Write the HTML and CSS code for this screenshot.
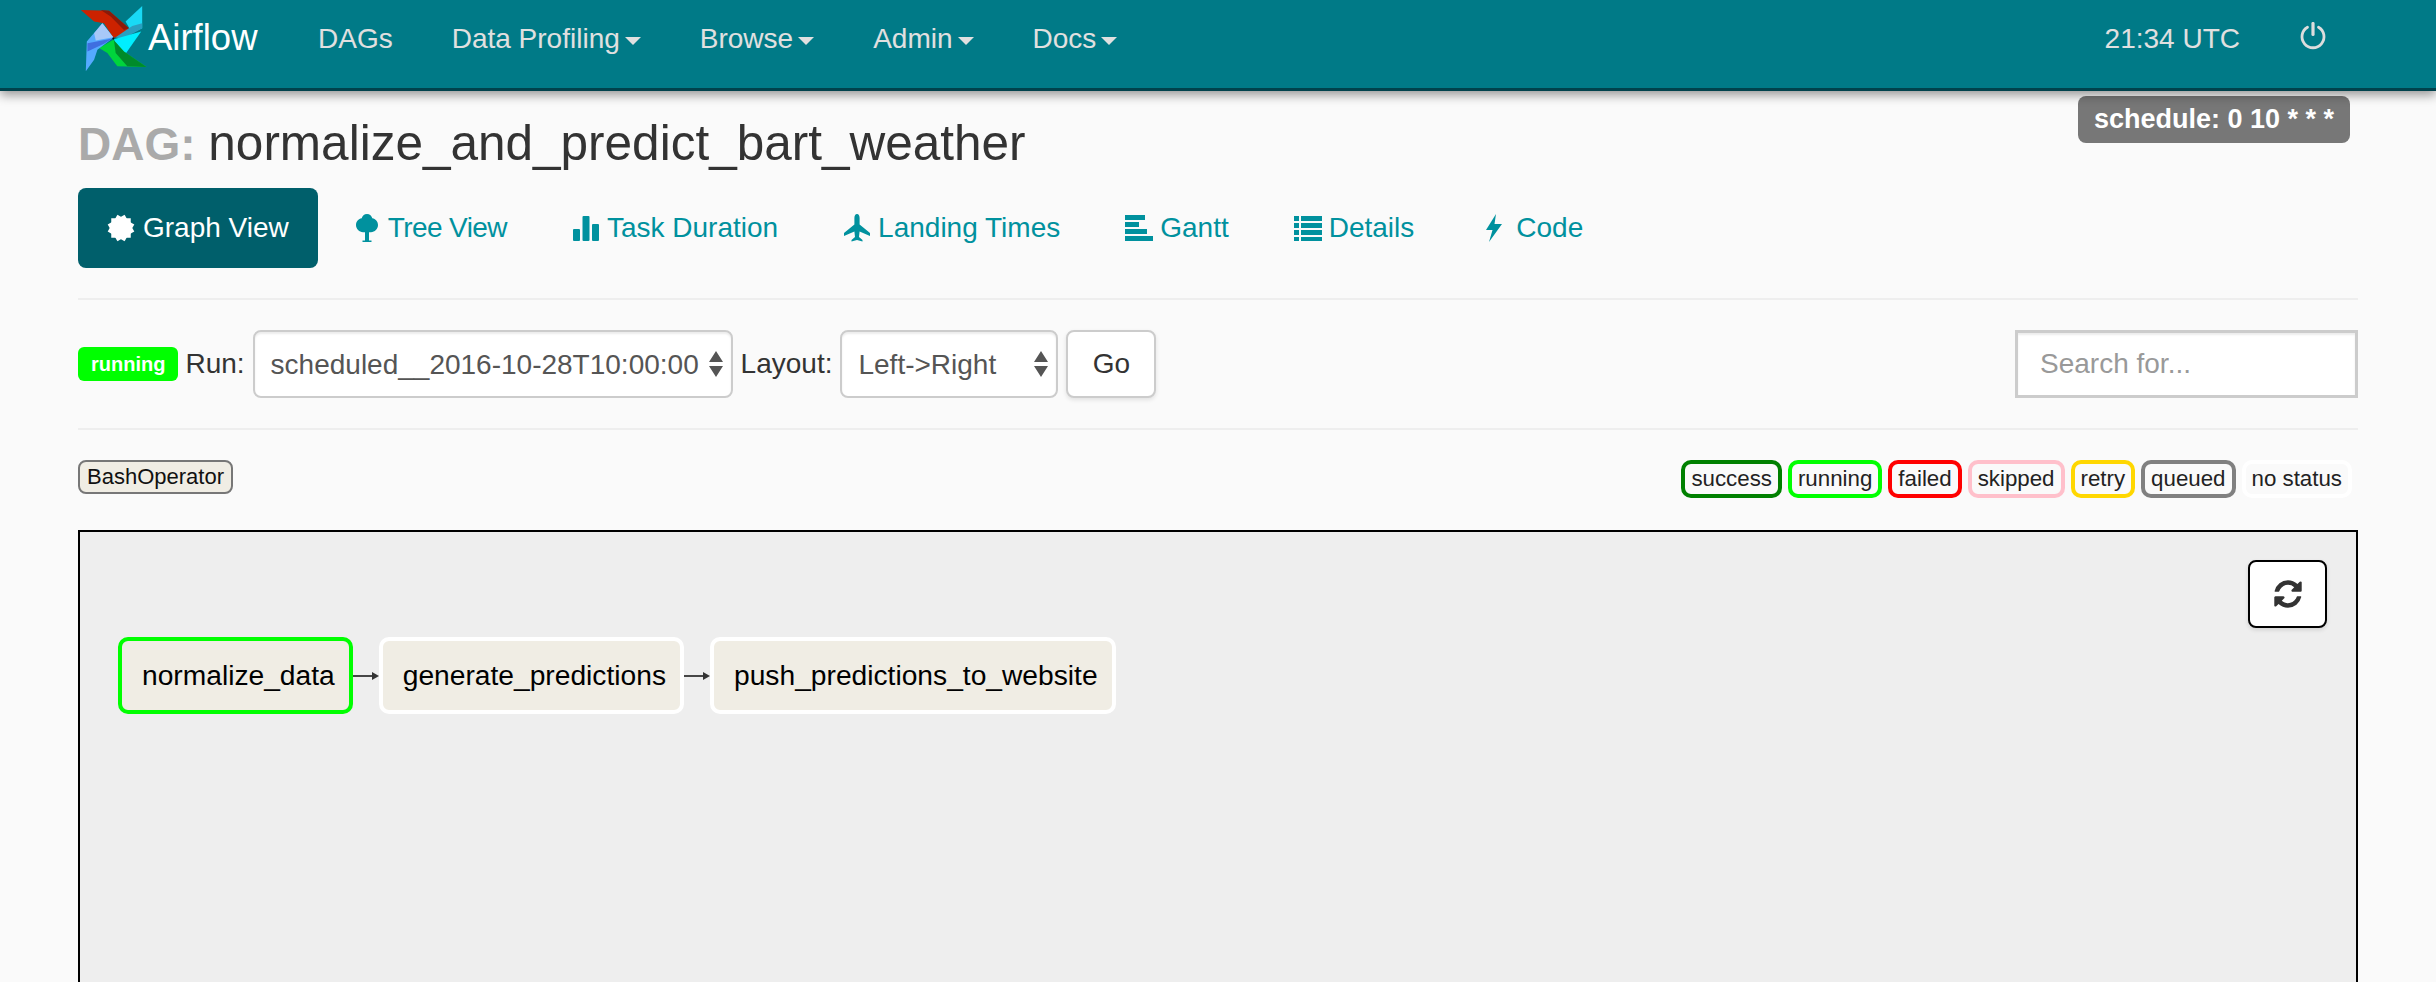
FILE: index.html
```html
<!DOCTYPE html>
<html lang="en">
<head>
<meta charset="utf-8">
<title>Airflow - DAG</title>
<link rel="stylesheet" href="styles.css">
</head>
<body>
<nav class="navbar">
  <a class="brand">
    <svg class="logo" viewBox="55 12 210 208" aria-hidden="true">
      <polygon fill="#cc2200" points="60,30 145,32 205,85 195,105 158,114 130,70 100,65"/>
      <polygon fill="#8a1a0a" points="120,30 145,32 205,85 190,90 150,50"/>
      <polygon fill="#19d9f5" points="245,18 195,65 215,100 245,85"/>
      <polygon fill="#2a9fc0" points="215,78 245,70 245,85 185,118 165,112"/>
      <polygon fill="#00eeff" points="160,118 242,95 195,162 165,135"/>
      <polygon fill="#00d43c" points="115,145 158,120 190,155 258,202 170,200 140,160"/>
      <polygon fill="#008a2a" points="160,122 190,155 258,202 200,200 165,160"/>
      <polygon fill="#55aaff" points="75,215 78,125 125,70 158,114 110,150 100,180"/>
      <polygon fill="#a8c8f8" points="100,100 125,70 158,112 105,122"/>
      <polygon fill="#3f6fe0" points="80,130 155,116 130,132 80,155"/>
      <circle cx="158" cy="116" r="3" fill="#111"/>
    </svg>
    <span class="brand-name">Airflow</span>
  </a>
  <ul class="nav-menu">
    <li class="nav-item">DAGs</li>
    <li class="nav-item">Data Profiling<i class="caret"></i></li>
    <li class="nav-item">Browse<i class="caret"></i></li>
    <li class="nav-item">Admin<i class="caret"></i></li>
    <li class="nav-item">Docs<i class="caret"></i></li>
  </ul>
  <div class="nav-right">
    <span class="clock">21:34 UTC</span>
    <svg class="power" viewBox="0 0 28 28" aria-hidden="true">
      <path d="M8.5 5.2a11 11 0 1 0 11 0" fill="none" stroke="#ddd" stroke-width="2.8" stroke-linecap="round"/>
      <path d="M14 1.5v11" fill="none" stroke="#ddd" stroke-width="3.2" stroke-linecap="round"/>
    </svg>
  </div>
</nav>

<main class="container">
  <header class="title-row">
    <h1 class="dag-title"><span class="dag-label">DAG: </span>normalize_and_predict_bart_weather</h1>
    <span class="schedule">schedule: 0 10 * * *</span>
  </header>

  <ul class="tabs">
    <li class="tab active">
      <svg class="tab-icon" viewBox="0 0 28 28" aria-hidden="true"><g fill="currentColor"><rect x="4.250" y="4.250" width="19.500" height="19.500"/><rect x="4.250" y="4.250" width="19.500" height="19.500" transform="rotate(30 14 14)"/><rect x="4.250" y="4.250" width="19.500" height="19.500" transform="rotate(60 14 14)"/></g></svg>
      Graph View
    </li>
    <li class="tab tree">
      <svg class="tab-icon" viewBox="0 0 28 28" aria-hidden="true"><path fill="currentColor" d="M14 0c2.800 0 4.800 2 5.300 4.300 3.200.7 5.700 3.200 5.700 6.700 0 4.200-3.300 7-7 7.300h-2v8.200h2.500V28H9.500v-1.500H12v-8.200h-2c-3.700-.3-7-3.100-7-7.300 0-3.500 2.500-6 5.700-6.700C9.200 2 11.200 0 14 0z"/></svg>
      Tree View
    </li>
    <li class="tab">
      <svg class="tab-icon" viewBox="0 0 28 28" aria-hidden="true"><g fill="currentColor"><rect x="1" y="15" width="7" height="12" rx="1"/><rect x="10.500" y="2" width="7" height="25" rx="1"/><rect x="20" y="10" width="7" height="17" rx="1"/></g></svg>
      Task Duration
    </li>
    <li class="tab">
      <svg class="tab-icon" viewBox="0 0 28 28" aria-hidden="true"><path fill="currentColor" d="M14 0c1.800 0 2.600 2 2.600 4v6.500L27 19v3l-10.400-4.500-.6 5.500 3.500 3v1.500L14 26l-5.500 1.500V26l3.500-3-.6-5.500L1 22v-3l10.400-8.500V4c0-2 .8-4 2.600-4z"/></svg>
      Landing Times
    </li>
    <li class="tab">
      <svg class="tab-icon" viewBox="0 0 28 28" aria-hidden="true"><g fill="currentColor"><rect x="0" y="1" width="20" height="5"/><rect x="0" y="8" width="14" height="5"/><rect x="0" y="15" width="22" height="5"/><rect x="0" y="22" width="28" height="5"/></g></svg>
      Gantt
    </li>
    <li class="tab">
      <svg class="tab-icon" viewBox="0 0 28 28" aria-hidden="true"><g fill="currentColor"><rect x="0" y="2" width="5" height="5"/><rect x="7" y="2" width="21" height="5"/><rect x="0" y="9" width="5" height="5"/><rect x="7" y="9" width="21" height="5"/><rect x="0" y="16" width="5" height="5"/><rect x="7" y="16" width="21" height="5"/><rect x="0" y="23" width="5" height="4"/><rect x="7" y="23" width="21" height="4"/></g></svg>
      Details
    </li>
    <li class="tab">
      <svg class="tab-icon bolt" viewBox="0 0 18 28" aria-hidden="true"><path fill="currentColor" d="M11 0 1 16h6.500L4 28 17 10H9.500z"/></svg>
      Code
    </li>
  </ul>

  <hr class="rule">

  <form class="controls">
    <span class="state-badge">running</span>
    <label class="field-label run-label">Run:</label>
    <div class="select-wrap run">
      <select class="select"><option>scheduled__2016-10-28T10:00:00</option></select>
      <svg class="updown" viewBox="0 0 14 26" aria-hidden="true"><path fill="#555" d="M7 0l7 11H0zM7 26L0 15h14z"/></svg>
    </div>
    <label class="field-label">Layout:</label>
    <div class="select-wrap layout">
      <select class="select"><option>Left-&gt;Right</option></select>
      <svg class="updown" viewBox="0 0 14 26" aria-hidden="true"><path fill="#555" d="M7 0l7 11H0zM7 26L0 15h14z"/></svg>
    </div>
    <button class="go" type="button">Go</button>
    <input class="search" type="text" placeholder="Search for...">
  </form>

  <hr class="rule second">

  <div class="legend-row">
    <span class="operator">BashOperator</span>
    <div class="legend">
      <span class="legend-item success">success</span>
      <span class="legend-item running">running</span>
      <span class="legend-item failed">failed</span>
      <span class="legend-item skipped">skipped</span>
      <span class="legend-item retry">retry</span>
      <span class="legend-item queued">queued</span>
      <span class="legend-item nostatus">no status</span>
    </div>
  </div>

  <section class="graph">
    <button class="refresh" type="button" aria-label="Refresh">
      <svg viewBox="0 0 1792 1792" aria-hidden="true"><path fill="#333" d="M1639 1056q0 5-1 7-64 268-268 434.500t-478 166.500q-146 0-282.500-55t-243.500-157l-129 129q-19 19-45 19t-45-19-19-45v-448q0-26 19-45t45-19h448q26 0 45 19t19 45-19 45l-137 137q71 66 161 102t187 36q134 0 250-65t186-179q11-17 53-117 8-23 30-23h192q13 0 22.500 9.500t9.500 22.500zm25-800v448q0 26-19 45t-45 19h-448q-26 0-45-19t-19-45 19-45l138-138q-148-137-349-137-134 0-250 65t-186 179q-11 17-53 117-8 23-30 23h-199q-13 0-22.500-9.500t-9.500-22.500v-7q65-268 270-434.500t480-166.500q146 0 284 55.500t245 156.500l130-129q19-19 45-19t45 19 19 45z"/></svg>
    </button>
    <div class="flow">
      <div class="node is-running">normalize_data</div>
      <svg class="edge" viewBox="0 0 26 12" aria-hidden="true"><path d="M0 6h20" stroke="#333" stroke-width="1.800"/><path d="M19 2l7 4-7 4z" fill="#333"/></svg>
      <div class="node">generate_predictions</div>
      <svg class="edge" viewBox="0 0 26 12" aria-hidden="true"><path d="M0 6h20" stroke="#333" stroke-width="1.800"/><path d="M19 2l7 4-7 4z" fill="#333"/></svg>
      <div class="node">push_predictions_to_website</div>
    </div>
  </section>
</main>
</body>
</html>
```
FILE: styles.css
```css
* { box-sizing: border-box; }
html, body { height: 982px; overflow: hidden; }
body {
  margin: 0;
  background: #fafafa;
  color: #333;
  font-family: "Liberation Sans", Arial, sans-serif;
  font-size: 28px;
}
ul { list-style: none; margin: 0; padding: 0; }

.navbar {
  height: 91px;
  background: #007a87;
  border-bottom: 3px solid #00424c;
  box-shadow: 0 4px 10px rgba(0, 0, 0, 0.4);
  display: flex;
  align-items: flex-start;
  padding-left: 79px;
  padding-right: 109px;
  color: #e0e0e0;
  position: relative;
}
.brand { display: flex; align-items: flex-start; width: 239px; flex: none; }
.logo { width: 70px; height: 69px; margin-top: 4px; flex: none; }
.brand-name { color: #fff; font-size: 36.5px; line-height: 40px; margin-top: 18px; margin-left: -1px; }
.nav-menu { display: flex; gap: 59px; padding-top: 21px; line-height: 36px; }
.nav-item { display: flex; align-items: center; }
.caret {
  width: 0; height: 0; margin-left: 5px; margin-top: 3px;
  border-left: 8px solid transparent;
  border-right: 8px solid transparent;
  border-top: 8px solid #e0e0e0;
}
.nav-right { margin-left: auto; display: flex; align-items: flex-start; padding-top: 21px; line-height: 36px; }
.power { width: 28px; height: 28px; margin-left: 59px; margin-top: 1px; }

.container { padding: 5px 78px 0; }
.title-row { display: flex; justify-content: space-between; align-items: flex-start; }
.dag-title { margin: 20px 0 0; font-size: 49.5px; font-weight: 400; line-height: 54px; color: #333; }
.dag-label { color: #aaa; font-weight: 700; font-size: 46px; }
.schedule {
  background: #777; color: #fff; font-weight: 700; font-size: 27px; line-height: 30px;
  padding: 8px 16px 9px; border-radius: 8px; margin-right: 8px;
}

.tabs { display: flex; gap: 5px; margin-top: 17px; color: #00919e; }
.tab { height: 80px; padding: 0 30px; display: flex; align-items: center; gap: 7px; border-radius: 8px; white-space: nowrap; }
.tab.active { background: #005f6b; color: #fff; padding: 0 29px; gap: 8px; }
.tab.tree { letter-spacing: -0.6px; }
.tab-icon { width: 28px; height: 28px; flex: none; }
.tab-icon.bolt { width: 18px; margin: 0 6px; }

.rule { border: 0; border-top: 2px solid #eee; margin: 30px 0 0; }
.rule.second { margin-top: 30px; }

.controls { display: flex; align-items: center; margin-top: 30px; height: 68px; }
.state-badge {
  background: #0f0; color: #fff; font-weight: 700; font-size: 20px; line-height: 34px;
  padding: 0 13px; border-radius: 6px; margin-right: 7px;
}
.field-label { margin-right: 8px; }
.select-wrap { position: relative; height: 68px; margin-right: 8px; }
.select-wrap.run { width: 480px; }
.select-wrap.layout { width: 218px; }
.select {
  appearance: none; width: 100%; height: 100%;
  background: #fff; color: #555;
  border: 2px solid #ccc; border-radius: 8px;
  font: 28px "Liberation Sans", Arial, sans-serif;
  padding: 0 16px;
  box-shadow: inset 0 2px 2px rgba(0, 0, 0, 0.075);
}
.updown { position: absolute; right: 10px; top: 21px; width: 14px; height: 26px; pointer-events: none; }
.go {
  width: 90px; height: 68px; background: #fff; color: #333;
  border: 2px solid #ccc; border-radius: 8px;
  font: 28px "Liberation Sans", Arial, sans-serif;
  box-shadow: 0 2px 4px rgba(0, 0, 0, 0.1);
}
.search {
  margin-left: auto; width: 343px; height: 68px; background: #fff;
  border: 3px solid #ccc; padding: 0 22px;
  font: 28px "Liberation Sans", Arial, sans-serif;
  box-shadow: inset 0 2px 2px rgba(0, 0, 0, 0.075);
}
.search::placeholder { color: #999; opacity: 1; }

.legend-row { display: flex; justify-content: space-between; align-items: flex-start; margin-top: 30px; height: 70px; }
.operator {
  background: #f0ede4; border: 2px solid #777; border-radius: 8px; color: #111;
  font-size: 22px; line-height: 30px; padding: 0 7px;
}
.legend { display: flex; gap: 6px; margin-right: 6px; color: #222; }
.legend-item {
  font-size: 22.300px; line-height: 28px; padding: 1px 6px; background: #fafafa;
  border: 4px solid; border-radius: 10px;
}
.success { border-color: #008000; }
.running { border-color: #0f0; }
.failed { border-color: #f00; }
.skipped { border-color: #ffc0cb; }
.retry { border-color: #ffd700; }
.queued { border-color: #808080; }
.nostatus { border-color: #fff; }

.graph {
  position: relative; height: 700px; background: #eee;
  border: 2px solid #000; padding: 105px 0 0 38px;
}
.refresh {
  position: absolute; top: 28px; right: 29px; width: 79px; height: 68px;
  background: #fff; border: 2px solid #000; border-radius: 8px;
  display: flex; align-items: center; justify-content: center; padding: 0;
  box-shadow: 0 2px 4px rgba(0, 0, 0, 0.12);
}
.refresh svg { width: 32px; height: 32px; }
.flow { display: flex; align-items: center; }
.node {
  height: 77px; line-height: 69px; background: #f0ede4; color: #000;
  border: 4px solid #fff; border-radius: 10px; padding: 0 14px 0 20px;
  font-size: 28.200px;
  white-space: nowrap;
}
.node.is-running { border-color: #0f0; }
.edge { width: 26px; height: 12px; flex: none; }
```
